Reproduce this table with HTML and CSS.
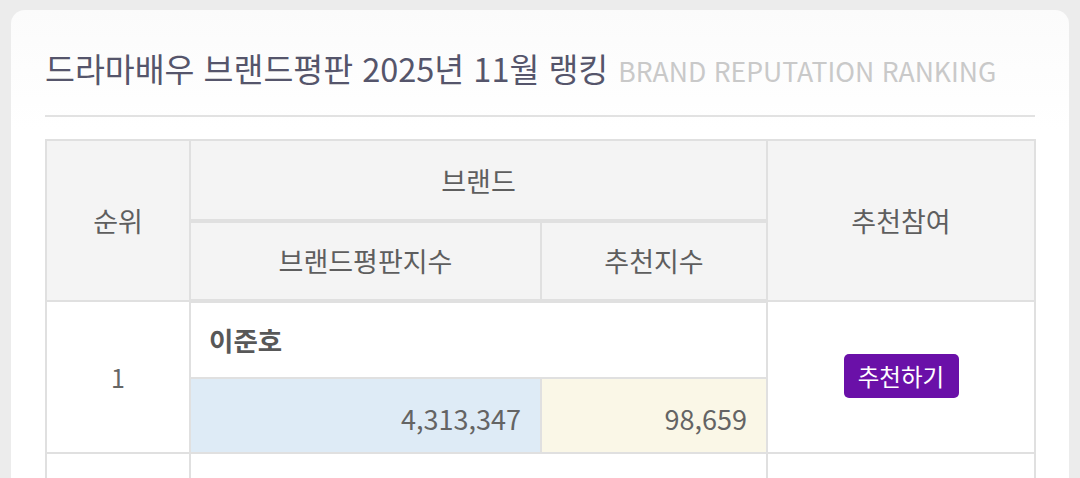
FILE: index.html
```html
<!DOCTYPE html>
<html lang="ko">
<head>
<meta charset="utf-8">
<link rel="stylesheet" href="styles.css">
</head>
<body>
<div class="card">
  <h2 class="title">드라마배우 브랜드평판 2025년 11월 랭킹 <span class="sub">BRAND REPUTATION RANKING</span></h2>
  <table class="rank">
    <colgroup>
      <col class="c1"><col class="c2"><col class="c3"><col class="c4">
    </colgroup>
    <thead>
      <tr class="h1">
        <th rowspan="2">순위</th>
        <th colspan="2" class="brand">브랜드</th>
        <th rowspan="2">추천참여</th>
      </tr>
      <tr class="h2">
        <th>브랜드평판지수</th>
        <th>추천지수</th>
      </tr>
    </thead>
    <tbody>
      <tr class="name-row">
        <td rowspan="2" class="num">1</td>
        <td colspan="2" class="name">이준호</td>
        <td rowspan="2" class="act"><button class="btn">추천하기</button></td>
      </tr>
      <tr class="val-row">
        <td class="v blue">4,313,347</td>
        <td class="v yellow">98,659</td>
      </tr>
      <tr class="name-row">
        <td rowspan="2" class="num"></td>
        <td colspan="2" class="name"></td>
        <td rowspan="2" class="act"></td>
      </tr>
      <tr class="val-row">
        <td class="v blue"></td>
        <td class="v yellow"></td>
      </tr>
    </tbody>
  </table>
</div>
</body>
</html>
```

FILE: styles.css
```css
html, body {
  margin: 0;
  padding: 0;
  background: #ececec;
  font-family: "Noto Sans CJK KR", "Noto Sans", sans-serif;
  overflow: hidden;
}
.card {
  margin: 10px 11px 0 11px;
  background: linear-gradient(#fbfbfb, #ffffff 120px);
  border-radius: 14px;
  padding: 36px 34px 40px 34px;
  min-height: 600px;
}
.title {
  margin: 0;
  font-size: 32.5px;
  font-weight: 400;
  line-height: 44px;
  height: 44px;
  color: #55556b;
  padding-bottom: 25px;
  border-bottom: 2px solid #e2e2e2;
  white-space: nowrap;
}
.title .sub {
  font-size: 26.6px;
  color: #c9c9c9;
  margin-left: 1px;
}
.rank {
  margin-top: 22px;
  border-collapse: collapse;
  width: 989px;
  table-layout: fixed;
  color: #5a5a5a;
  font-size: 27px;
}
.c1 { width: 144px; }
.c2 { width: 351px; }
.c3 { width: 226px; }
.c4 { width: 268px; }
.rank th, .rank td {
  border: 2px solid #e0e0e0;
  padding: 0;
  line-height: 36px;
}
.rank th {
  background: #f4f4f4;
  font-weight: 400;
  color: #5e5e5e;
}
.h1 th { height: 76px; }
.h1 th.brand { border-bottom-width: 4px; padding-top: 2px; }
.h2 th { height: 76px; border-bottom-width: 4px; }
.num { text-align: center; color: #666; font-size: 25px; }
.name-row td { height: 74px; }
.name {
  font-weight: 700;
  font-size: 26.5px;
  padding-left: 18px !important;
  color: #585858;
  vertical-align: middle;
}
.val-row td { height: 67px; }
.v {
  text-align: right;
  padding-right: 19px !important;
  padding-top: 6px !important;
  color: #646464;
  font-size: 27px;
}
.blue { background: #deebf6; }
.yellow { background: #faf7e7; }
.act { text-align: center; }
.btn {
  font-family: "Noto Sans CJK KR", sans-serif;
  background: #6a10a8;
  color: #fff;
  border: none;
  border-radius: 5px;
  font-size: 23.5px;
  width: 115px;
  height: 44px;
  padding: 0;
  margin-top: -20px;
  cursor: pointer;
}
```
